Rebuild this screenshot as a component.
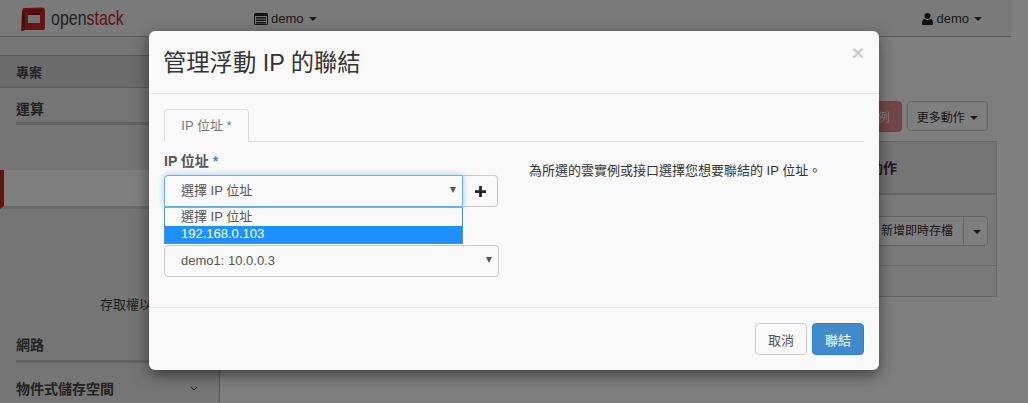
<div class="page">
  <header class="topbar">
    <div class="brand">
      <svg class="logo" viewBox="0 0 25 25" width="25" height="25" aria-hidden="true">
        <path d="M3 2 L21 1.500 Q24 1.500 24 4 V22 Q24 24 22 24 H4 L0.500 25 L1 6 Q1 2 3 2 Z" fill="#c92d28" />
        <path d="M1 6 L4 4 V24 L0.500 25 Z" fill="#9a1e1a" />
        <path d="M4 3.500 H21 V6.500 H4 Z" fill="#a81f1b" />
        <rect x="7" y="7" width="12" height="2" fill="#7d1613" />
        <rect x="7" y="9" width="12" height="8" fill="#ece4e2" />
      </svg>
      <span class="wordmark">open<b>stack</b></span>
    </div>
    <div class="project">
      <svg viewBox="0 0 14 12" width="14" height="12" aria-hidden="true">
        <path d="M0 1.500 Q0 0 1.500 0 H12.500 Q14 0 14 1.500 V10.500 Q14 12 12.500 12 H1.500 Q0 12 0 10.500 Z M1 3 V11 H13 V3 Z M2 4 H12 V5.500 H2 Z M2 6.500 H12 V8 H2 Z M2 9 H12 V10.500 H2 Z" fill="#222" fill-rule="evenodd" />
      </svg>
      <span>demo</span>
      <i class="caret"></i>
    </div>
    <div class="user">
      <svg viewBox="0 0 11 12" width="11" height="12" aria-hidden="true">
        <circle cx="5.500" cy="3" r="3" fill="#222" />
        <path d="M0 11 Q0 6 2.500 6 Q5.500 8 8.500 6 Q11 6 11 11 Q11 12 10 12 H1 Q0 12 0 11 Z" fill="#222" />
      </svg>
      <span>demo</span>
      <i class="caret"></i>
    </div>
  </header>

  <div class="body">
    <aside class="sidebar">
      <div class="side-project">專案</div>
      <div class="side-head first">運算</div>
      <div class="side-active"></div>
      <div class="side-sub">存取權以及安全性</div>
      <div class="side-head net">網路</div>
      <div class="side-head plain">
        <span>物件式儲存空間</span>
        <svg viewBox="0 0 10 6" width="8" height="5" aria-hidden="true"><path d="M1 1 L5 5 L9 1" fill="none" stroke="#222" stroke-width="1.200" /></svg>
      </div>
    </aside>

    <main class="content">
      <div class="actions">
        <button class="btn danger">實例</button>
        <button class="btn">更多動作 <i class="caret"></i></button>
      </div>
      <div class="table">
        <div class="th">動作</div>
        <div class="tr">
          <div class="split">
            <span>新增即時存檔</span>
            <span class="split-toggle"><i class="caret"></i></span>
          </div>
        </div>
        <div class="tf"></div>
      </div>
    </main>
  </div>

  <div class="backdrop"></div>

  <div class="modal">
    <div class="modal-header">
      <h3>管理浮動 IP 的聯結</h3>
      <span class="close">×</span>
    </div>
    <div class="modal-body">
      <div class="tabs">
        <div class="tab">IP 位址 <em>*</em></div>
      </div>
      <div class="columns">
        <div class="left">
          <div class="label">IP 位址 <em>*</em></div>
          <div class="ip-row">
            <div class="select focused">選擇 IP 位址<i class="arrow"></i></div>
            <div class="plus">
              <svg viewBox="0 0 12 12" width="11" height="11" aria-hidden="true"><path d="M4.500 0 H7.500 V4.500 H12 V7.500 H7.500 V12 H4.500 V7.500 H0 V4.500 H4.500 Z" fill="#222" /></svg>
            </div>
            <ul class="options">
              <li>選擇 IP 位址</li>
              <li class="hit">192.168.0.103</li>
            </ul>
          </div>
          <div class="select port">demo1: 10.0.0.3<i class="arrow"></i></div>
        </div>
        <p class="help">為所選的雲實例或接口選擇您想要聯結的 IP 位址。</p>
      </div>
    </div>
    <div class="modal-footer">
      <button class="btn cancel">取消</button>
      <button class="btn primary">聯結</button>
    </div>
  </div>
</div>

<style>
  :global(body) {
    margin: 0;
    background: #fff;
  }

  .page {
    position: relative;
    width: 1028px;
    height: 403px;
    overflow: hidden;
    font-family: "Liberation Sans", "Noto Sans CJK TC", sans-serif;
    font-size: 13px;
    color: #333;
  }

  .topbar {
    display: flex;
    align-items: center;
    width: 1011px;
    height: 37px;
    box-sizing: border-box;
    background: #f5f5f5;
    border-bottom: 1px solid #b8b8b8;
  }

  .brand {
    display: flex;
    align-items: center;
    gap: 5px;
    width: 254px;
    padding-left: 21px;
    box-sizing: border-box;
  }

  .wordmark {
    display: inline-block;
    font-size: 21px;
    color: #444;
    transform: scaleX(0.76);
    transform-origin: left center;
  }

  .wordmark b {
    font-weight: 400;
    color: #c62a25;
  }

  .project, .user {
    display: flex;
    align-items: center;
    gap: 3px;
    padding-top: 1px;
    color: #333;
  }

  .user {
    margin-left: auto;
    margin-right: 29px;
  }

  .caret {
    display: inline-block;
    width: 0;
    height: 0;
    margin-left: 2px;
    border-top: 4px solid currentColor;
    border-left: 4px solid transparent;
    border-right: 4px solid transparent;
    vertical-align: middle;
  }

  .body {
    display: grid;
    grid-template-columns: 220px 1fr;
    height: 366px;
  }

  .sidebar {
    border-right: 1px solid #b0b0b0;
    padding-top: 18px;
    box-sizing: border-box;
    background: #ebebeb;
    font-weight: 700;
    color: #444;
  }

  .side-project {
    height: 33px;
    line-height: 34px;
    padding-left: 16px;
    box-sizing: border-box;
    background: #d6d6d6;
    border-top: 1px solid #b5b5b5;
    border-bottom: 1px solid #b5b5b5;
  }

  .side-head {
    margin-left: 16px;
    font-size: 14px;
  }

  .first {
    height: 37px;
    line-height: 42px;
    box-sizing: border-box;
    border-bottom: 3px solid #c4c4c4;
  }

  .side-active {
    height: 39px;
    margin-top: 45px;
    background: #fff;
    border-left: 4px solid #c62a25;
    border-bottom: 3px solid #d5d5d5;
    box-sizing: border-box;
  }

  .side-sub {
    margin-top: 86px;
    padding-left: 100px;
    font-weight: 400;
    line-height: 20px;
    white-space: nowrap;
  }

  .net {
    height: 33px;
    margin-top: 15px;
    line-height: 30px;
    box-sizing: border-box;
    border-bottom: 3px solid #c4c4c4;
  }

  .plain {
    display: flex;
    align-items: center;
    justify-content: space-between;
    height: 50px;
    padding-right: 21px;
  }

  .content {
    padding: 64px 40px 0 0;
    min-width: 0;
    font-size: 12px;
  }

  .actions {
    display: flex;
    justify-content: flex-end;
    align-items: flex-start;
    gap: 5px;
    height: 40px;
  }

  .btn {
    height: 30px;
    padding: 0 9px;
    font: inherit;
    color: #333;
    background: #fff;
    border: 1px solid #ccc;
    border-radius: 4px;
  }

  .danger {
    height: 31px;
    padding: 0 11px;
    background: #d9534f;
    border-color: #d43f3a;
    color: #fff;
    opacity: 0.65;
  }

  .table {
    width: 777px;
    margin-right: -9px;
    margin-left: auto;
    border: 1px solid #ccc;
    box-sizing: border-box;
  }

  .th {
    height: 53px;
    line-height: 52px;
    box-sizing: border-box;
    padding-left: 648px;
    font-size: 14px;
    font-weight: 700;
    background: #ebebeb;
    border-bottom: 2px solid #ccc;
  }

  .tr {
    display: flex;
    justify-content: flex-end;
    height: 71px;
    padding: 21px 8px 0 0;
    box-sizing: border-box;
    background: #f5f5f5;
    border-bottom: 1px solid #ccc;
  }

  .tf {
    height: 30px;
    background: #f5f5f5;
  }

  .split {
    display: flex;
    height: 30px;
    box-sizing: border-box;
    line-height: 28px;
    padding-left: 8px;
    border: 1px solid #ccc;
    border-radius: 4px;
    background: #fff;
  }

  .split-toggle {
    width: 23px;
    margin-left: 10px;
    text-align: center;
    border-left: 1px solid #ccc;
  }

  .backdrop {
    position: absolute;
    inset: 0;
    background: rgba(0, 0, 0, 0.5);
  }

  .modal {
    position: absolute;
    left: 149px;
    top: 31px;
    width: 730px;
    height: 339px;
    display: flex;
    flex-direction: column;
    background: #f9f9f9;
    border-radius: 6px;
    box-shadow: 0 5px 15px rgba(0, 0, 0, 0.5);
  }

  .modal-header {
    display: flex;
    justify-content: space-between;
    align-items: flex-start;
    height: 63px;
    padding: 0 15px 0 14px;
    box-sizing: border-box;
    border-bottom: 1px solid #e5e5e5;
  }

  h3 {
    margin: 0;
    font-size: 23.3px;
    font-weight: 400;
    line-height: 64px;
    color: #333;
  }

  .close {
    margin-top: 9px;
    font-size: 21px;
    font-weight: 700;
    line-height: 26px;
    color: #ccc;
  }

  .modal-body {
    flex: 1;
    padding: 15px 15px 0;
  }

  .tabs {
    display: flex;
    height: 33px;
    box-sizing: border-box;
    border-bottom: 1px solid #ddd;
  }

  .tab {
    width: 85px;
    height: 33px;
    box-sizing: border-box;
    line-height: 32px;
    text-align: center;
    color: #777;
    background: #f9f9f9;
    border: 1px solid #ddd;
    border-bottom: 0;
    border-radius: 4px 4px 0 0;
  }

  em {
    font-style: normal;
    color: #428bca;
  }

  .columns {
    display: flex;
  }

  .left {
    width: 335px;
  }

  .label {
    margin-top: 10px;
    height: 23px;
    line-height: 18px;
    font-size: 14px;
    font-weight: 700;
    color: #555;
  }

  .ip-row {
    position: relative;
    display: flex;
    height: 32px;
  }

  .select {
    position: relative;
    height: 32px;
    box-sizing: border-box;
    line-height: 30px;
    padding-left: 16px;
    color: #555;
    border: 1px solid #ccc;
    border-radius: 4px;
  }

  .focused {
    z-index: 1;
    width: 299px;
    border-color: #66afe9;
    border-radius: 4px 0 0 0;
    box-shadow: 0 0 6px rgba(102, 175, 233, 0.6);
  }

  .arrow {
    position: absolute;
    right: 6px;
    top: 11px;
    width: 0;
    height: 0;
    border-top: 6px solid #555;
    border-left: 3.500px solid transparent;
    border-right: 3.500px solid transparent;
  }

  .plus {
    display: flex;
    align-items: center;
    justify-content: center;
    width: 35px;
    box-sizing: border-box;
    border: 1px solid #ccc;
    border-left: 0;
    border-radius: 0 4px 4px 0;
  }

  .options {
    position: absolute;
    z-index: 2;
    left: 0;
    top: 32px;
    width: 299px;
    margin: 0;
    padding: 0;
    list-style: none;
    color: #555;
    background: #f9f9f9;
    border: 1px solid #5a8fc5;
    border-top-color: #7facd9;
    box-sizing: border-box;
    height: 37px;
  }

  .options li {
    padding-left: 16px;
    height: 18px;
    line-height: 17px;
    white-space: nowrap;
  }

  .options .hit {
    color: #fff;
    background: #1e90ff;
    height: 17px;
    line-height: 15px;
  }

  .port {
    margin-top: 38px;
    width: 335px;
  }

  .help {
    margin: 21px 0 0 30px;
    line-height: 16px;
    color: #333;
  }

  .modal-footer {
    display: flex;
    justify-content: flex-end;
    gap: 5px;
    height: 63px;
    padding: 15px 15px 0 0;
    box-sizing: border-box;
    border-top: 1px solid #e5e5e5;
  }

  .cancel, .primary {
    width: 52px;
    height: 32px;
    padding: 0;
    background: #f9f9f9;
    color: #555;
  }

  .primary {
    background: #428bca;
    border-color: #357ebd;
    color: #fff;
  }
</style>
